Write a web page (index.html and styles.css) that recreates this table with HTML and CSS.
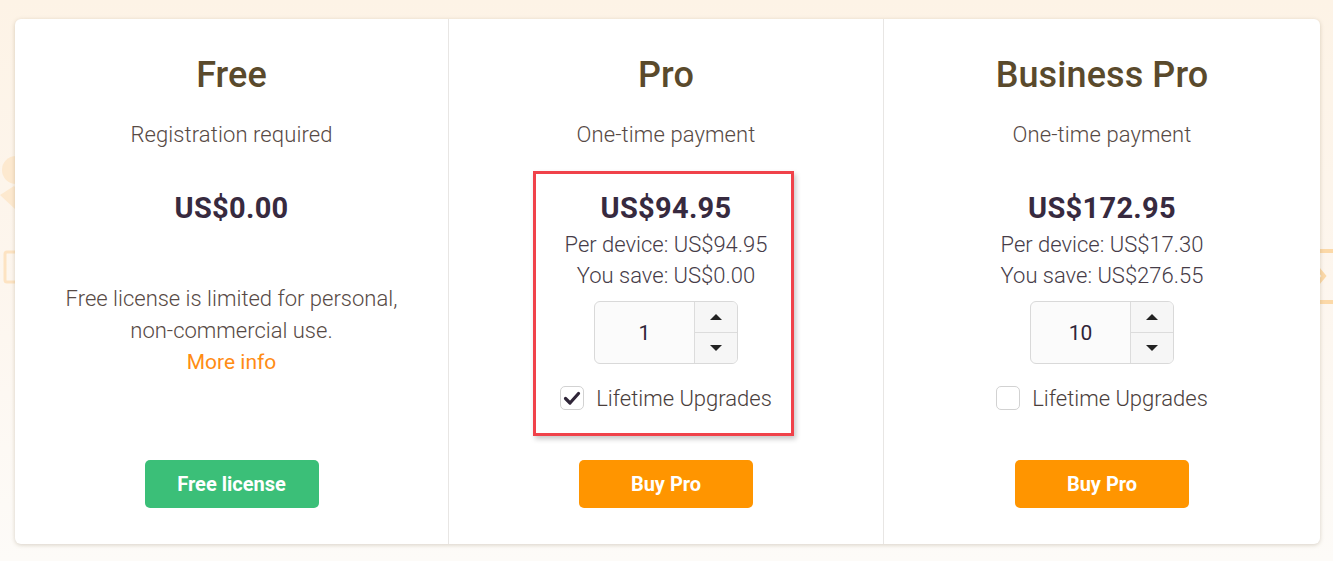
FILE: index.html
```html
<!DOCTYPE html>
<html lang="en">
<head>
<meta charset="utf-8">
<title>Pricing</title>
<link rel="stylesheet" href="styles.css">
</head>
<body>
<div class="deco deco-left">
  <svg width="40" height="160" viewBox="0 0 40 160">
    <circle cx="16" cy="30" r="14" fill="#fde9cf"/>
    <path d="M0 55 L14 46 L26 58 L16 70 Z" fill="#fde9cf"/>
    <rect x="5" y="112" width="14" height="30" rx="2" fill="none" stroke="#fde3c2" stroke-width="3"/>
  </svg>
</div>
<div class="deco deco-right">
  <svg width="20" height="70" viewBox="0 0 20 70">
    <rect x="0" y="7" width="20" height="4" fill="#fcd9a8"/>
    <rect x="0" y="58" width="20" height="4" fill="#fcd9a8"/>
    <path d="M1 22 L11 34 L1 46" fill="none" stroke="#fcd9a8" stroke-width="4"/>
  </svg>
</div>
<main class="page">
  <section class="card">
    <div class="plan">
      <h2 class="plan-title">Free</h2>
      <p class="plan-sub">Registration required</p>
      <div class="price-block">
        <div class="price">US$0.00</div>
      </div>
      <p class="free-note">Free license is limited for personal,<br>non-commercial use.<br><a class="more" href="#">More info</a></p>
      <a class="btn btn-green" href="#">Free license</a>
    </div>
    <div class="plan">
      <h2 class="plan-title">Pro</h2>
      <p class="plan-sub">One-time payment</p>
      <div class="price-block highlight">
        <div class="price">US$94.95</div>
        <div class="detail">Per device: US$94.95</div>
        <div class="detail">You save: US$0.00</div>
        <div class="spinner">
          <div class="spin-value">1</div>
          <div class="spin-btns">
            <span class="spin-btn"><span class="tri up"></span></span>
            <span class="spin-btn"><span class="tri down"></span></span>
          </div>
        </div>
        <label class="check-row">
          <span class="box checked">
            <svg width="18" height="18" viewBox="0 0 18 18"><path d="M2.5 9.5 L7 14 L15.5 4.5" fill="none" stroke="#2f2538" stroke-width="3.2" stroke-linecap="round" stroke-linejoin="round"/></svg>
          </span>
          <span class="check-label">Lifetime Upgrades</span>
        </label>
      </div>
      <a class="btn btn-orange" href="#">Buy Pro</a>
    </div>
    <div class="plan">
      <h2 class="plan-title">Business Pro</h2>
      <p class="plan-sub">One-time payment</p>
      <div class="price-block">
        <div class="price">US$172.95</div>
        <div class="detail">Per device: US$17.30</div>
        <div class="detail">You save: US$276.55</div>
        <div class="spinner">
          <div class="spin-value">10</div>
          <div class="spin-btns">
            <span class="spin-btn"><span class="tri up"></span></span>
            <span class="spin-btn"><span class="tri down"></span></span>
          </div>
        </div>
        <label class="check-row">
          <span class="box"></span>
          <span class="check-label">Lifetime Upgrades</span>
        </label>
      </div>
      <a class="btn btn-orange" href="#">Buy Pro</a>
    </div>
  </section>
</main>
</body>
</html>
```
FILE: styles.css
```css
*, *::before, *::after { box-sizing: border-box; }
html, body { margin: 0; padding: 0; }
body {
  width: 1333px;
  height: 561px;
  overflow: hidden;
  font-family: Roboto, "Liberation Sans", sans-serif;
  background: linear-gradient(180deg, #fdf3e6 0%, #fdf6ee 50%, #fdfbf8 100%);
  position: relative;
}
.deco { position: absolute; }
.deco-left { left: 0; top: 140px; }
.deco-right { right: 0; top: 242px; }
.page {
  position: relative;
  padding: 19px 13px 0 15px;
}
.card {
  height: 525px;
  background: #fff;
  border-radius: 6px;
  box-shadow: 0 1px 4px rgba(120, 100, 70, 0.28);
  display: grid;
  grid-template-columns: 433px 435px 437px;
}
.plan {
  display: flex;
  flex-direction: column;
  align-items: center;
  padding: 36px 0 36px;
  text-align: center;
}
.plan + .plan { border-left: 1px solid #e8e6e4; }
.plan-title {
  margin: 0;
  font-size: 36px;
  line-height: 40px;
  font-weight: 500;
  color: #5a4a2c;
  letter-spacing: 0.1px;
}
.plan-sub {
  margin: 26px 0 0;
  font-size: 22px;
  line-height: 28px;
  font-weight: 300;
  color: #574a45;
  letter-spacing: 0.1px;
}
.price-block {
  margin-top: 41px;
  display: flex;
  flex-direction: column;
  align-items: center;
  position: relative;
}
.price-block.highlight::before {
  content: "";
  position: absolute;
  top: -19px;
  bottom: -26px;
  left: 50%;
  width: 261px;
  margin-left: -133px;
  border: 3px solid #f0424a;
  box-shadow: 2px 3px 5px rgba(0, 0, 0, 0.22);
  pointer-events: none;
}
.price {
  font-size: 29px;
  line-height: 36px;
  font-weight: 700;
  color: #372a3f;
  letter-spacing: 0.3px;
  margin-bottom: 3px;
}
.detail {
  font-size: 22px;
  line-height: 31px;
  font-weight: 300;
  color: #463c48;
}
.spinner {
  margin-top: 10px;
  width: 144px;
  height: 63px;
  border: 1px solid #d9d9d9;
  border-radius: 6px;
  background: #fbfbfb;
  display: flex;
  overflow: hidden;
}
.spin-value {
  flex: 1;
  display: flex;
  align-items: center;
  justify-content: center;
  font-size: 21px;
  font-weight: 400;
  color: #2f2538;
}
.spin-btns {
  width: 43px;
  border-left: 1px solid #dcdcdc;
  background: #f6f6f6;
  display: flex;
  flex-direction: column;
}
.spin-btn {
  flex: 1;
  display: flex;
  align-items: center;
  justify-content: center;
}
.spin-btn + .spin-btn { border-top: 1px solid #dcdcdc; }
.tri {
  width: 0;
  height: 0;
  border-left: 6px solid transparent;
  border-right: 6px solid transparent;
}
.tri.up { border-bottom: 6px solid #222; }
.tri.down { border-top: 6px solid #222; }
.check-row {
  margin-top: 22px;
  display: flex;
  align-items: center;
  gap: 12px;
  height: 24px;
}
.box {
  width: 24px;
  height: 24px;
  border: 1px solid #d2d2d2;
  border-radius: 5px;
  background: #fff;
  display: flex;
  align-items: center;
  justify-content: center;
}
.check-label {
  font-size: 22px;
  font-weight: 300;
  color: #4a3e3c;
}
.free-note {
  margin: 54px 0 0;
  font-size: 22px;
  line-height: 31.5px;
  font-weight: 300;
  color: #574a45;
}
.more {
  color: #ff8c14;
  font-size: 21px;
  font-weight: 400;
  text-decoration: none;
}
.btn {
  margin-top: auto;
  width: 174px;
  height: 48px;
  border-radius: 5px;
  display: flex;
  align-items: center;
  justify-content: center;
  color: #fff;
  font-size: 20px;
  font-weight: 700;
  text-decoration: none;
}
.btn-green { background: #3bbf78; }
.btn-orange { background: #ff9500; }
```
